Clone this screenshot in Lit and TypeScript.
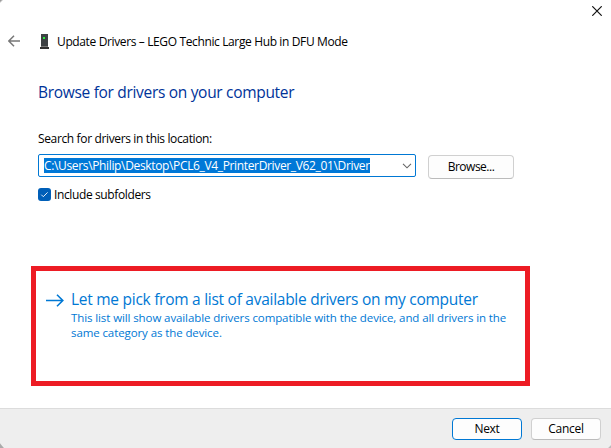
import { LitElement, html, css } from "lit";
import { customElement } from "lit/decorators.js";

@customElement("app-root")
export class AppRoot extends LitElement {
  static styles = css`
    :host {
      display: flex;
      flex-direction: column;
      width: 611px;
      height: 448px;
      overflow: hidden;
      background: #fff;
      color: #000;
      font: 12px/16px "Open Sans", "Noto Sans", sans-serif;
      white-space: nowrap;
    }
    * { box-sizing: border-box; }
    svg { display: block; flex: none; }
    .caption {
      height: 33px; display: flex; justify-content: flex-end; padding: 6px 9px 0 0;
      background: linear-gradient(135deg, #999 1px, transparent 2.5px);
    }
    .title { display: flex; height: 17px; padding-left: 8px; }
    .back { margin-top: 2px; }
    .device { margin: 1px 7px 0 18px; }
    .title-text { letter-spacing: -0.37px; padding-top: 1px; }
    .body { flex: 1; padding: 30px 0 0 38px; }
    h1 { margin: 0; font-size: 15.5px; line-height: 24px; font-weight: 400; color: #003399; letter-spacing: -0.31px; }
    .label { margin-top: 27px; letter-spacing: -0.36px; }
    .row { display: flex; align-items: flex-start; margin-top: 7px; }
    .combo {
      width: 378px; height: 23px; display: flex; align-items: center; justify-content: space-between;
      border: 1px solid #0078d4; border-radius: 2px; padding: 0 3px 0 5px;
    }
    .sel { height: 15px; line-height: 15px; background: #0078d7; color: #fff; letter-spacing: -0.35px; }
    .btn {
      height: 22px; width: 70px; display: flex; align-items: center; justify-content: center;
      background: #fdfdfd; border: 1px solid #d0d0d0; border-bottom-color: #bbb; border-radius: 4px;
      letter-spacing: -0.3px;
    }
    .browse { width: 86px; height: 24px; margin: 1px 0 0 12px; letter-spacing: -0.5px; }
    .check { display: flex; margin-top: 8px; gap: 3px; }
    .box { width: 13px; height: 13px; margin-top: 1px; background: #005fb8; border-radius: 3px; }
    .include { letter-spacing: -0.38px; }
    .pick { width: 499px; height: 120px; margin: 63px 0 0 -7px; border: 5px solid #ed1c24; display: flex; padding: 17px 0 0 10px; }
    .arrow { margin: 6px 7px 0 0; }
    .pick-title { font-size: 15.5px; line-height: 22px; color: #0078d4; letter-spacing: -0.27px; }
    .pick-note { font-size: 11.5px; line-height: 15px; color: #0078d4; letter-spacing: -0.1px; }
    .footer {
      height: 40px; border-top: 1px solid #dcdcdc; display: flex; justify-content: flex-end; gap: 9px; padding: 9px 10px 0 0;
      background:
        linear-gradient(50deg, #aaa 2.5px, transparent 3.5px),
        linear-gradient(-45deg, #bbb 1.5px, transparent 2.5px),
        #eee;
    }
    .primary { border-color: #0078d4; }
  `;

  render() {
    return html`
      <div class="caption">
        <svg width="10" height="10" viewBox="0 0 10 10" fill="none" stroke="#111" stroke-width="1.2"><path d="M.3.3l9.4 9.4M9.7.3L.3 9.7" /></svg>
      </div>
      <div class="title">
        <svg class="back" width="12" height="12" viewBox="0 0 12 12" fill="none" stroke="#777" stroke-width="1.5"><path d="M12 6H.8M6 .8L.8 6 6 11.2" /></svg>
        <svg class="device" width="12" height="15" viewBox="0 0 12 15">
          <path fill="#3c4043" d="M3 0h7v12H3z" /><path fill="#777" d="M3 12h7v1H3z" /><path fill="#303030" d="M2 13h9v2H2z" /><path fill="#2bf23c" d="M5 3h2v2H5z" />
        </svg>
        <span class="title-text">Update Drivers – LEGO Technic Large Hub in DFU Mode</span>
      </div>
      <div class="body">
        <h1><span>Browse for drivers on your computer</span></h1>
        <div class="label"><span>Search for drivers in this location:</span></div>
        <div class="row">
          <div class="combo">
            <span class="sel">C:\\Users\\Philip\\Desktop\\PCL6_V4_PrinterDriver_V62_01\\Driver</span>
            <svg width="10" height="6" viewBox="0 0 10 6" fill="none" stroke="#666" stroke-width="1.1"><path d="M1 .8l4 4 4-4" /></svg>
          </div>
          <div class="btn browse"><span>Browse...</span></div>
        </div>
        <div class="check">
          <svg class="box" viewBox="0 0 13 13" fill="none" stroke="#fff" stroke-width=".9"><path d="M3.3 6.7l2 2 4.3-4.3" /></svg>
          <span class="include">Include subfolders</span>
        </div>
        <div class="pick">
          <svg class="arrow" width="18" height="13" viewBox="0 0 18 13" fill="none" stroke="#0078d4" stroke-width="1.6"><path d="M0 6.5h17M11 .7l5.8 5.8-5.8 5.8" /></svg>
          <div>
            <div class="pick-title"><span>Let me pick from a list of available drivers on my computer</span></div>
            <div class="pick-note"><span>This list will show available drivers compatible with the device, and all drivers in the</span><br /><span>same category as the device.</span></div>
          </div>
        </div>
      </div>
      <div class="footer">
        <div class="btn primary"><span>Next</span></div>
        <div class="btn"><span>Cancel</span></div>
      </div>
    `;
  }
}
